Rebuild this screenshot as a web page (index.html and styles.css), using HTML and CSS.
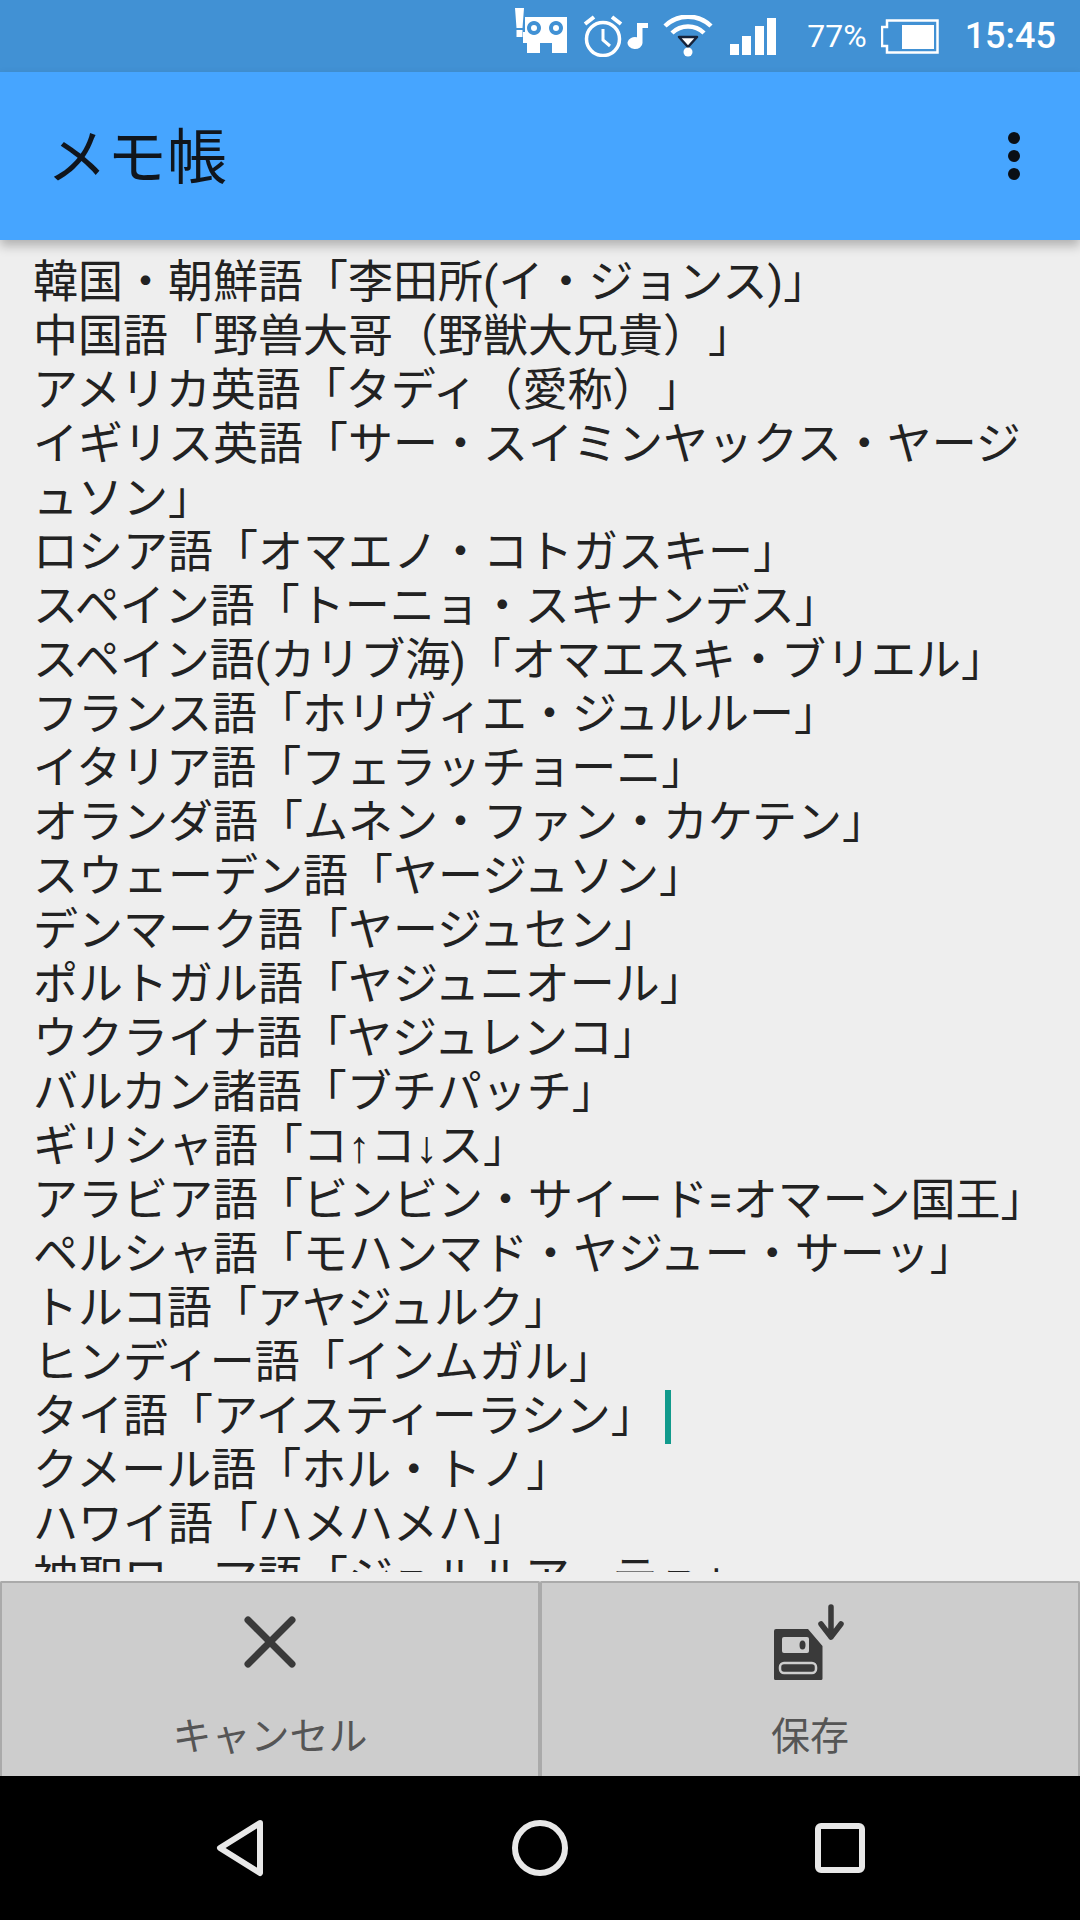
FILE: index.html
```html
<!DOCTYPE html>
<html lang="ja">
<head>
<meta charset="utf-8">
<title>メモ帳</title>
<link rel="stylesheet" href="styles.css">
</head>
<body>
<div class="screen">
  <header class="statusbar">
    <svg class="st-robot" viewBox="0 0 52 45" width="52" height="45"><path fill="#fff" d="M0 0h9l-1.500 20h-6zM1.500 22h6v7h-6z"/><path fill="#fff" fill-rule="evenodd" d="M10 9h42v36H37V35H25v10H12V35H8V24h2zM19 13a7 7 0 1 0 .01 0zM41 13a7 7 0 1 0 .01 0z"/><circle cx="19" cy="20" r="3" fill="#fff"/><circle cx="41" cy="20" r="3" fill="#fff"/></svg>
    <svg class="st-alarm" viewBox="0 0 40 42" width="40" height="42"><circle cx="20" cy="24" r="16.500" fill="none" stroke="#fff" stroke-width="3.500"/><path d="M20 14v11l7 6" fill="none" stroke="#fff" stroke-width="3"/><path d="M2 9l9-7M38 9l-9-7" stroke="#fff" stroke-width="4"/></svg>
    <svg class="st-note" viewBox="0 0 21 26" width="21" height="26"><path fill="#fff" d="M10 0h11v5h-5.500v15a7.500 6 0 1 1-5.500-5.800z"/></svg>
    <svg class="st-wifi" viewBox="0 0 52 42" width="52" height="42"><path d="M3 11a33 33 0 0 1 46 0M10 18a23 23 0 0 1 32 0" fill="none" stroke="#fff" stroke-width="4.500"/><path d="M17 22h18l-9 10z" fill="#fff" stroke="#16233a" stroke-width="2.500" stroke-linejoin="round"/><circle cx="26" cy="37" r="4.500" fill="#fff"/></svg>
    <svg class="st-signal" viewBox="0 0 46 37" width="46" height="37"><path fill="#fff" d="M0 26h9v11H0zM12 18h9v19h-9zM25 8h9v29h-9zM37 0h9v37h-9z"/></svg>
    <span class="st-pct">77%</span>
    <svg class="st-batt" viewBox="0 0 58 35" width="58" height="35"><path d="M1 8h5V1.500h50.500v32H6V27H1z" fill="none" stroke="#fff" stroke-width="2.500"/><path fill="#fff" d="M21 6h32v24H21z"/></svg>
    <span class="st-time">15:45</span>
  </header>
  <div class="appbar">
    <h1 class="title">メモ帳</h1>
    <div class="overflow"><i></i><i></i><i></i></div>
  </div>
  <main class="editor">
    <div class="viewport">
    <p class="memo">韓国・朝鮮語「李田所(イ・ジョンス)」
中国語「野兽大哥（野獣大兄貴）」
アメリカ英語「タディ（愛称）」
イギリス英語「サー・スイミンヤックス・ヤージ
ュソン」
ロシア語「オマエノ・コトガスキー」
スペイン語「トーニョ・スキナンデス」
スペイン語(カリブ海)「オマエスキ・ブリエル」
フランス語「ホリヴィエ・ジュルルー」
イタリア語「フェラッチョーニ」
オランダ語「ムネン・ファン・カケテン」
スウェーデン語「ヤージュソン」
デンマーク語「ヤージュセン」
ポルトガル語「ヤジュニオール」
ウクライナ語「ヤジュレンコ」
バルカン諸語「ブチパッチ」
ギリシャ語「コ<span class="arw">↑</span>コ<span class="arw">↓</span>ス」
アラビア語「ビンビン・サイード=オマーン国王」
ペルシャ語「モハンマド・ヤジュー・サーッ」
トルコ語「アヤジュルク」
ヒンディー語「インムガル」
タイ語「アイスティーラシン」<span class="caret"></span>
クメール語「ホル・トノ」
ハワイ語「ハメハメハ」
神聖ローマ語「ジュルルアーテュ」</p>
    </div>
  </main>
  <div class="actions">
    <button class="action">
      <span class="ic-wrap"><svg viewBox="0 0 60 60" width="60" height="60"><path d="M8 8l44 44M52 8L8 52" stroke="#3a3a3a" stroke-width="7" stroke-linecap="round"/></svg></span>
      <span class="label">キャンセル</span>
    </button>
    <button class="action">
      <span class="ic-wrap"><svg viewBox="0 0 72 76" width="72" height="76"><path fill="#3a3a3a" d="M2 25h32l14.500 17v32.500a1.500 1.500 0 0 1-1.500 1.500H1.500A1.500 1.500 0 0 1 0 74.500V27a2 2 0 0 1 2-2z"/><rect x="8" y="33" width="27" height="16" rx="2" fill="#cdcdcd"/><ellipse cx="28.500" cy="41" rx="3" ry="4.500" fill="#3a3a3a"/><rect x="6" y="59" width="36" height="10" rx="4" fill="none" stroke="#cdcdcd" stroke-width="2.500"/><path d="M57 3v30M47 20l10 13 10-13" fill="none" stroke="#3a3a3a" stroke-width="5.500" stroke-linecap="round" stroke-linejoin="round"/></svg></span>
      <span class="label">保存</span>
    </button>
  </div>
  <nav class="navbar">
    <svg viewBox="0 0 52 60" width="52" height="60"><path d="M46 5L6 30l40 25z" fill="none" stroke="#e8e8e8" stroke-width="6" stroke-linejoin="round"/></svg>
    <svg viewBox="0 0 60 60" width="60" height="60"><circle cx="30" cy="30" r="25" fill="none" stroke="#e8e8e8" stroke-width="6"/></svg>
    <svg viewBox="0 0 52 52" width="52" height="52"><rect x="4" y="4" width="44" height="44" rx="3" fill="none" stroke="#e8e8e8" stroke-width="6"/></svg>
  </nav>
</div>
</body>
</html>
```
FILE: styles.css
```css
* { box-sizing: border-box; }
html, body { margin: 0; padding: 0; }
body { font-family: Roboto, "Noto Sans CJK JP", sans-serif; background: #000; text-spacing-trim: space-all; }
.screen { width: 1080px; height: 1920px; display: flex; flex-direction: column; overflow: hidden; }
.statusbar { height: 72px; flex: none; background: #4191d4; display: flex; align-items: center; justify-content: flex-end; color: #fff; padding-right: 24px; }
.st-robot { margin: 0 16px 11px 0; }
.st-alarm { margin-right: 4px; }
.st-note { margin-right: 14px; }
.st-wifi { margin-right: 16px; }
.st-signal { margin-right: 31px; }
.st-pct { font-size: 32px; margin-right: 14px; }
.st-batt { margin-right: 26px; }
.st-time { font-size: 36px; font-weight: 500; }
.appbar { height: 168px; flex: none; background: #46a5ff; display: flex; align-items: center; justify-content: space-between; padding: 0 60px 0 47px; box-shadow: 0 6px 10px rgba(0,0,0,.25); position: relative; z-index: 1; }
.title { margin: 0 0 8px; font-size: 60px; font-weight: 400; color: #10151c; }
.overflow { display: flex; flex-direction: column; gap: 6px; }
.overflow i { width: 12px; height: 12px; border-radius: 50%; background: #0a0f16; }
.editor { flex: none; height: 1341px; background: #eeeeee; padding-bottom: 9px; display: flex; }
.viewport { flex: 1; overflow: hidden; padding: 16px 0 0 33px; }
.memo { margin: 0; white-space: pre-line; font-size: 45px; line-height: 54px; color: #222; }
.arw { font-family: "Liberation Sans", sans-serif; font-size: 45px; line-height: 0; }
.caret { display: inline-block; width: 6px; height: 54px; background: #119a8c; margin-left: 9px; vertical-align: top; }
.actions { height: 195px; flex: none; display: flex; background: #eeeeee; }
.action { flex: 1; background: #cdcdcd; border: 2px solid #aaaaaa; border-bottom: 0; border-radius: 2px 2px 0 0; display: flex; flex-direction: column; align-items: center; padding: 0; font: inherit; }
.ic-wrap { flex: none; height: 118px; display: flex; align-items: center; justify-content: center; }
.label { font-size: 39px; color: #555; line-height: 48px; margin-top: 12px; }
.navbar { flex: 1; background: #000; display: grid; grid-template-columns: repeat(3, 1fr); justify-items: center; align-items: center; padding: 0 90px; }
```
